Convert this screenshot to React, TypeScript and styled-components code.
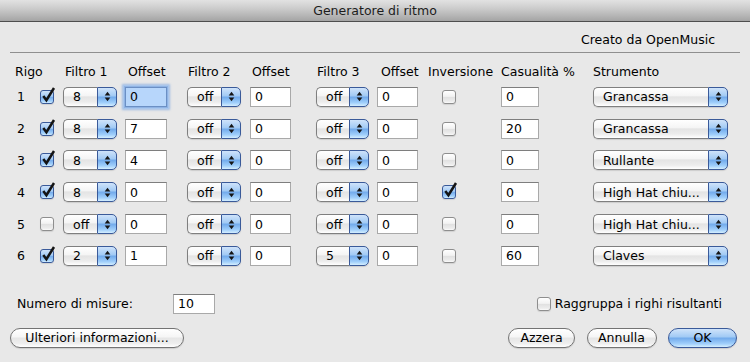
import React from "react";
import styled, { createGlobalStyle, css } from "styled-components";

const GlobalStyle = createGlobalStyle`
  html, body { margin: 0; padding: 0; background: #e8e8e8; }
  body { font-family: "DejaVu Sans", "Liberation Sans", sans-serif; font-size: 12.5px; color: #000; }
  * { box-sizing: border-box; }
`;

const Window = styled.div`
  width: 750px;
  height: 362px;
  background: #e8e8e8;
  display: flex;
  flex-direction: column;
  overflow: hidden;
`;

const TitleBar = styled.div`
  height: 22px;
  flex: none;
  display: flex;
  align-items: center;
  justify-content: center;
  background: linear-gradient(#e2e2e2 0%, #cccccc 40%, #b5b5b5 75%, #a4a4a4 100%);
  border-bottom: 1px solid #4e4e4e;
  color: #1c1c1c;
  padding-bottom: 1px;
`;

const CreditRow = styled.div`
  height: 30px;
  padding: 5px 35px 0 0;
  display: flex;
  align-items: center;
  justify-content: flex-end;
`;

const Separator = styled.div`
  height: 1px;
  margin: 0 10px;
  background: #8f8f8f;
`;

const Table = styled.div`
  margin: 8px 0 0 15px;
  display: grid;
  grid-template-columns: 25px 23px 62px 62px 63px 66px 61px 51px 73px 92px 135px;
  grid-template-rows: 20px repeat(6, 31.8px);
  align-items: center;
`;

const Head = styled.div<{ $indent?: number; $span?: number }>`
  padding-left: ${(p) => p.$indent ?? 0}px;
  grid-column: span ${(p) => p.$span ?? 1};
  white-space: nowrap;
`;

const RowNum = styled.div`
  padding-left: 2px;
`;

const Cell = styled.div<{ $indent?: number }>`
  display: flex;
  align-items: center;
  padding-left: ${(p) => p.$indent ?? 0}px;
`;

const BoxWrap = styled.span`
  position: relative;
  display: inline-block;
  width: 14px;
  height: 14px;
  flex: none;
`;

const Box = styled.span<{ $on?: boolean }>`
  display: block;
  width: 14px;
  height: 14px;
  border-radius: 3px;
  box-shadow: 0 1px 1px rgba(0, 0, 0, 0.1);
  ${(p) =>
    p.$on
      ? css`
          border: 1px solid #3a5a99;
          background: linear-gradient(#cfe3fa 0%, #a3cbf5 45%, #76adec 52%, #a1d0fb 85%, #d4eeff 100%);
        `
      : css`
          border: 1px solid #8e8e8e;
          background: linear-gradient(#ffffff 0%, #f2f2f2 45%, #e1e1e1 52%, #ececec 85%, #fbfbfb 100%);
        `}
`;

const Tick = styled.svg`
  position: absolute;
  left: 1px;
  top: -3px;
  width: 15px;
  height: 16px;
  overflow: visible;
`;

const Checkbox: React.FC<{ on?: boolean }> = ({ on }) => (
  <BoxWrap>
    <Box $on={on} />
    {on && (
      <Tick viewBox="0 0 15 16">
        <path d="M2.3 9 L5.4 13.2 L13 1" fill="none" stroke="#141414" strokeWidth="2.5" strokeLinejoin="miter" strokeLinecap="butt" />
      </Tick>
    )}
  </BoxWrap>
);

const Field = styled.div<{ $w: number; $focus?: boolean }>`
  width: ${(p) => p.$w}px;
  height: 20px;
  padding-left: 4px;
  display: flex;
  align-items: center;
  background: #fff;
  border: 1px solid #a9a9a9;
  border-top-color: #7e7e7e;
  ${(p) =>
    p.$focus &&
    css`
      background: #b7d6fb;
      border-color: #6b8fc4;
      box-shadow: 0 0 0 1px #8fb3e4, 0 0 0 2px #a9c6ec, 0 0 2px 3px rgba(130, 170, 225, 0.7);
    `}
`;

const Popup = styled.div<{ $w: number }>`
  width: ${(p) => p.$w}px;
  height: 20px;
  display: flex;
  box-shadow: 0 1px 1px rgba(0, 0, 0, 0.12);
  border-radius: 5px;
`;

const PopupLabel = styled.div`
  flex: 1;
  display: flex;
  align-items: center;
  padding-left: 9px;
  border: 1px solid #7f7f7f;
  border-right: none;
  border-radius: 5px 0 0 5px;
  background: linear-gradient(#ffffff 0%, #f5f5f5 42%, #e4e4e4 50%, #ececec 78%, #ffffff 100%);
  white-space: nowrap;
  overflow: hidden;
`;

const PopupArrows = styled.div`
  width: 20px;
  flex: none;
  display: flex;
  align-items: center;
  justify-content: center;
  border: 1px solid #3a5a99;
  border-radius: 0 5px 5px 0;
  background: linear-gradient(#cfe3fa 0%, #a3cbf5 42%, #74acec 52%, #a0cffb 82%, #d4eeff 100%);
`;

const ArrowSvg = styled.svg`
  width: 7px;
  height: 11px;
`;

const Select: React.FC<{ w: number; value: string }> = ({ w, value }) => (
  <Popup $w={w}>
    <PopupLabel>{value}</PopupLabel>
    <PopupArrows>
      <ArrowSvg viewBox="0 0 7 11">
        <path d="M3.5 0.8 L6.3 4.4 L0.7 4.4 Z" fill="#151515" />
        <path d="M0.7 6.6 L6.3 6.6 L3.5 10.2 Z" fill="#151515" />
      </ArrowSvg>
    </PopupArrows>
  </Popup>
);

const OptionsRow = styled.div`
  margin-top: 21px;
  height: 22px;
  display: flex;
  align-items: center;
  justify-content: space-between;
  padding: 0 28px 0 17px;
`;

const Labeled = styled.div`
  display: flex;
  align-items: center;
`;

const MeasureLabel = styled.span`
  width: 156px;
`;

const GroupLabel = styled.span`
  margin-left: 4px;
`;

const ButtonRow = styled.div`
  margin-top: 12px;
  height: 22px;
  display: flex;
  align-items: center;
  justify-content: space-between;
  padding: 0 13px 0 10px;
`;

const ButtonGroup = styled.div`
  display: flex;
  gap: 11.5px;
`;

const Button = styled.div<{ $w: number; $primary?: boolean }>`
  width: ${(p) => p.$w}px;
  height: 20px;
  border-radius: 10px;
  display: flex;
  align-items: center;
  justify-content: center;
  white-space: nowrap;
  box-shadow: 0 1px 1px rgba(0, 0, 0, 0.12);
  ${(p) =>
    p.$primary
      ? css`
          border: 1px solid #3a5a99;
          background: linear-gradient(#cfe3fa 0%, #a3cbf5 42%, #74acec 52%, #a0cffb 82%, #d4eeff 100%);
        `
      : css`
          border: 1px solid #737373;
          background: linear-gradient(#ffffff 0%, #f6f6f6 42%, #e6e6e6 52%, #eeeeee 80%, #ffffff 100%);
        `}
`;

type Row = {
  on: boolean;
  f1: string;
  o1: string;
  f2: string;
  o2: string;
  f3: string;
  o3: string;
  inv: boolean;
  rnd: string;
  inst: string;
};

const rows: Row[] = [
  { on: true, f1: "8", o1: "0", f2: "off", o2: "0", f3: "off", o3: "0", inv: false, rnd: "0", inst: "Grancassa" },
  { on: true, f1: "8", o1: "7", f2: "off", o2: "0", f3: "off", o3: "0", inv: false, rnd: "20", inst: "Grancassa" },
  { on: true, f1: "8", o1: "4", f2: "off", o2: "0", f3: "off", o3: "0", inv: false, rnd: "0", inst: "Rullante" },
  { on: true, f1: "8", o1: "0", f2: "off", o2: "0", f3: "off", o3: "0", inv: true, rnd: "0", inst: "High Hat chiu..." },
  { on: false, f1: "off", o1: "0", f2: "off", o2: "0", f3: "off", o3: "0", inv: false, rnd: "0", inst: "High Hat chiu..." },
  { on: true, f1: "2", o1: "1", f2: "off", o2: "0", f3: "5", o3: "0", inv: false, rnd: "60", inst: "Claves" },
];

export default function App() {
  return (
    <>
      <GlobalStyle />
      <Window>
        <TitleBar>Generatore di ritmo</TitleBar>
        <CreditRow>Creato da OpenMusic</CreditRow>
        <Separator />
        <Table>
          <Head $span={2}>Rigo</Head>
          <Head $indent={2}>Filtro 1</Head>
          <Head $indent={3}>Offset</Head>
          <Head $indent={1}>Filtro 2</Head>
          <Head $indent={2}>Offset</Head>
          <Head $indent={1}>Filtro 3</Head>
          <Head $indent={4}>Offset</Head>
          <Head>Inversione</Head>
          <Head>Casualità %</Head>
          <Head>Strumento</Head>
          {rows.map((r, i) => (
            <React.Fragment key={i}>
              <RowNum>{i + 1}</RowNum>
              <Cell>
                <Checkbox on={r.on} />
              </Cell>
              <Cell>
                <Select w={54} value={r.f1} />
              </Cell>
              <Cell>
                <Field $w={42} $focus={i === 0}>{r.o1}</Field>
              </Cell>
              <Cell>
                <Select w={54} value={r.f2} />
              </Cell>
              <Cell>
                <Field $w={41}>{r.o2}</Field>
              </Cell>
              <Cell>
                <Select w={53} value={r.f3} />
              </Cell>
              <Cell>
                <Field $w={41}>{r.o3}</Field>
              </Cell>
              <Cell $indent={14}>
                <Checkbox on={r.inv} />
              </Cell>
              <Cell>
                <Field $w={38}>{r.rnd}</Field>
              </Cell>
              <Cell>
                <Select w={135} value={r.inst} />
              </Cell>
            </React.Fragment>
          ))}
        </Table>
        <OptionsRow>
          <Labeled>
            <MeasureLabel>Numero di misure:</MeasureLabel>
            <Field $w={42}>10</Field>
          </Labeled>
          <Labeled>
            <Checkbox />
            <GroupLabel>Raggruppa i righi risultanti</GroupLabel>
          </Labeled>
        </OptionsRow>
        <ButtonRow>
          <Button $w={174}>Ulteriori informazioni...</Button>
          <ButtonGroup>
            <Button $w={67}>Azzera</Button>
            <Button $w={70}>Annulla</Button>
            <Button $w={69} $primary>OK</Button>
          </ButtonGroup>
        </ButtonRow>
      </Window>
    </>
  );
}
